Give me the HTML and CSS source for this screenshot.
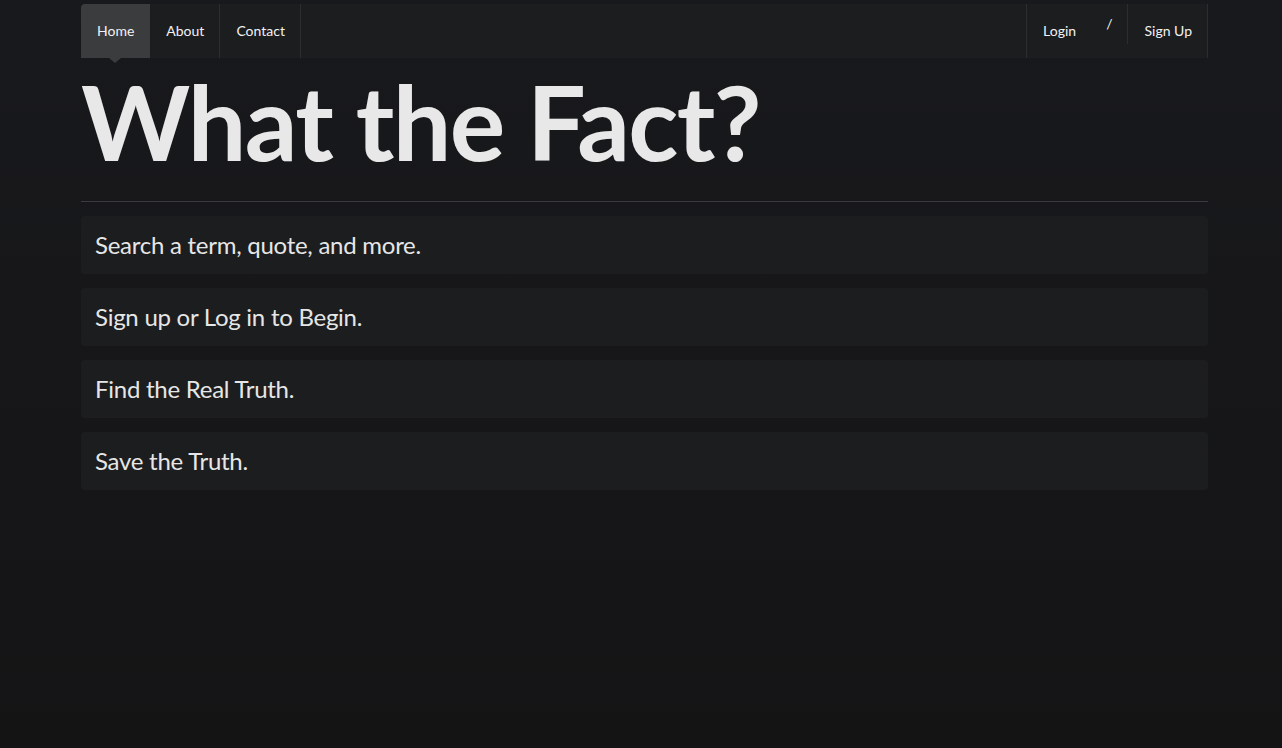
FILE: index.html
```html
<!DOCTYPE html>
<html lang="en">
<head>
    <meta charset="UTF-8">
    <meta name="viewport" content="width=device-width, initial-scale=1.0">
    <title>What the Fact?</title>
    <link rel="stylesheet" href="styles.css">
</head>
<body>
    <div class="container">
        <nav class="navbar">
            <ul class="nav-left">
                <li class="active"><a href="#">Home</a></li>
                <li><a href="#">About</a></li>
                <li><a href="#">Contact</a></li>
            </ul>
            <ul class="nav-right">
                <li class="login"><a href="#">Login</a></li>
                <li class="slash">/</li>
                <li class="signup"><a href="#">Sign Up</a></li>
            </ul>
        </nav>

        <h1 class="title">What the Fact?</h1>
        <hr class="divider">

        <div class="steps">
            <div class="step">Search a term, quote, and more.</div>
            <div class="step">Sign up or Log in to Begin.</div>
            <div class="step">Find the Real Truth.</div>
            <div class="step">Save the Truth.</div>
        </div>
    </div>
</body>
</html>
```

FILE: styles.css
```css
html, body {
    height: 100%;
}

body {
    font-family: Lato, "Open Sans", sans-serif;
    background: linear-gradient(to bottom, #18191c, #141415);
    color: #e6e6e6;
    margin: 0;
    padding: 0;
}

.container {
    width: 1127px;
    margin: 0 0 0 81px;
    padding-top: 4px;
}

.navbar {
    display: flex;
    justify-content: space-between;
    height: 54px;
    background-color: #1c1d1f;
    border-radius: 4px;
}

.navbar ul {
    list-style: none;
    margin: 0;
    padding: 0;
    display: flex;
}

.navbar li {
    position: relative;
}

.navbar a {
    display: block;
    height: 54px;
    line-height: 54px;
    padding: 0 15px 0 16px;
    color: #f2f2f2;
    font-size: 14px;
    text-decoration: none;
}

.nav-left li {
    border-right: 1px solid #2c2d30;
}

.nav-left li.active {
    background-color: #3b3c3e;
    border-radius: 4px 0 0 0;
    border-right-color: #3b3c3e;
}

.nav-left li.active::after {
    content: "";
    position: absolute;
    left: 50%;
    bottom: -5px;
    margin-left: -6px;
    border-left: 6px solid transparent;
    border-right: 6px solid transparent;
    border-top: 5px solid #3b3c3e;
}

.nav-right .login {
    border-left: 1px solid #2c2d30;
}

.nav-right .login a {
    padding: 0 14px 0 16px;
}

.nav-right .slash {
    height: 40px;
    line-height: 40px;
    padding: 0 15px 0 16px;
    font-size: 14px;
    color: #f2f2f2;
    border-right: 1px solid #2c2d30;
}

.nav-right .signup {
    border-right: 1px solid #2c2d30;
}

.nav-right .signup a {
    padding: 0 15px 0 16px;
}

.title {
    margin: 6px 0 0 0;
    font-size: 104px;
    line-height: 1.1;
    font-weight: 700;
    color: #e8e8e8;
    letter-spacing: -1.7px;
}

.divider {
    margin: 23px 0 14px 0;
    border: 0;
    border-top: 1px solid #3a3b3e;
}

.steps {
    display: flex;
    flex-direction: column;
    gap: 14px;
}

.step {
    background-color: #1c1d1f;
    border-radius: 4px;
    padding: 14px 14px;
    font-size: 24px;
    line-height: 30px;
    letter-spacing: -0.26px;
    color: #e6e6e6;
}
```
